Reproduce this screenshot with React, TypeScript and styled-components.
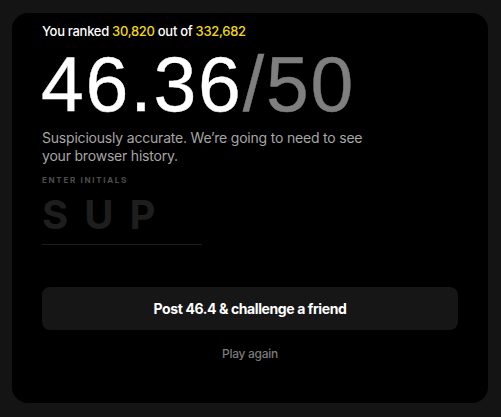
import React from 'react'
import styled, { createGlobalStyle } from 'styled-components'

const GlobalStyle = createGlobalStyle`
  html, body {
    margin: 0;
    padding: 0;
    background: #141414;
    font-family: Inter, "Noto Sans", sans-serif;
  }
`

const Page = styled.div`
  padding: 13px 13px 14px 12px;
  min-height: 417px;
  box-sizing: border-box;
`

const Card = styled.div`
  background: #000;
  border-radius: 16px;
  height: 390px;
  box-sizing: border-box;
  padding: 10px 30px 0 30px;
  display: flex;
  flex-direction: column;
`

const Rank = styled.div`
  color: #fff;
  font-size: 13px;
  font-weight: 500;
  line-height: 16px;
  letter-spacing: -0.3px;
`

const Gold = styled.span`
  color: #f5d90a;
`

const Score = styled.div`
  font-family: "Liberation Sans", Arial, sans-serif;
  font-size: 77px;
  line-height: 76px;
  font-weight: 400;
  color: #fff;
  letter-spacing: 1.8px;
  margin-top: 7px;
  margin-left: -1px;
  -webkit-text-stroke: 0.4px currentColor;
`

const Total = styled.span`
  color: #7f7f7f;
`

const Blurb = styled.p`
  margin: 7px 0 0 0;
  color: #a6a6a6;
  font-size: 14px;
  line-height: 18px;
  letter-spacing: -0.2px;
`

const Label = styled.div`
  margin-top: 10px;
  color: #4e4e4e;
  font-size: 8px;
  line-height: 10px;
  font-weight: 700;
  letter-spacing: 1.7px;
`

const Initials = styled.div`
  margin-top: 10px;
  width: 160px;
  border-bottom: 1px solid #1c1c1c;
  color: #1e1e1e;
  font-size: 40px;
  font-weight: 700;
  letter-spacing: 16px;
  line-height: 40px;
  padding-bottom: 9px;
`

const PostButton = styled.button`
  margin-top: 42px;
  height: 43px;
  padding: 0;
  border: none;
  border-radius: 8px;
  background: #161616;
  color: #fff;
  font-family: inherit;
  font-size: 14px;
  font-weight: 700;
  letter-spacing: -0.4px;
`

const Again = styled.button`
  margin-top: 17px;
  padding: 0;
  align-self: center;
  background: none;
  border: none;
  color: #7a7a7a;
  font-family: inherit;
  font-size: 12px;
  line-height: 14px;
  font-weight: 500;
  letter-spacing: -0.3px;
`

export default function App() {
  return (
    <>
      <GlobalStyle />
      <Page>
        <Card>
          <Rank>
            You ranked <Gold>30,820</Gold> out of <Gold>332,682</Gold>
          </Rank>
          <Score>
            46.36<Total>/50</Total>
          </Score>
          <Blurb>
            Suspiciously accurate. We’re going to need to see
            <br />
            your browser history.
          </Blurb>
          <Label>ENTER INITIALS</Label>
          <Initials>SUP</Initials>
          <PostButton>Post 46.4 &amp; challenge a friend</PostButton>
          <Again>Play again</Again>
        </Card>
      </Page>
    </>
  )
}
